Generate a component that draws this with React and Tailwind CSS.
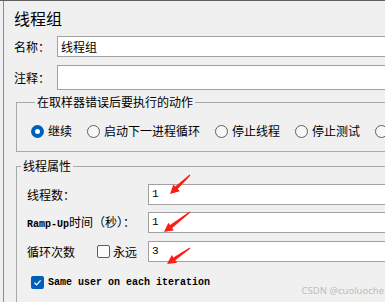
import React from 'react';

const cjk = "font-['Noto_Sans_CJK_SC','Microsoft_YaHei',sans-serif]";
const mono = "font-['Liberation_Mono','Courier_New',monospace]";

function Radio({ checked, label }) {
  return (
    <div className="flex items-center gap-[4px] shrink-0">
      {checked ? (
        <span className="w-[13px] h-[13px] rounded-full bg-[#005fb8] flex items-center justify-center">
          <span className="w-[5px] h-[5px] rounded-full bg-white" />
        </span>
      ) : (
        <span className="w-[13px] h-[13px] rounded-full border border-[#5f5f5f] bg-[#f7f7f7]" />
      )}
      {label && <span className="whitespace-nowrap">{label}</span>}
    </div>
  );
}

function Checkbox({ checked }) {
  if (checked) {
    return (
      <span className="w-[13px] h-[13px] rounded-[2px] bg-[#005fb8] flex items-center justify-center shrink-0">
        <svg width="9" height="9" viewBox="0 0 9 9">
          <path d="M1.5 4.8 L3.6 6.8 L7.6 2.3" fill="none" stroke="white" strokeWidth="1.2" />
        </svg>
      </span>
    );
  }
  return <span className="w-[13px] h-[13px] rounded-[2px] border border-[#5c5c5c] bg-[#fbfbfb] shrink-0" />;
}

function Field({ value, className = '' }) {
  return (
    <div className={`flex-1 flex items-center bg-white border border-[#a0a0a0] pl-[3px] ${className}`}>
      {value}
    </div>
  );
}

function Arrow({ tail, tip }) {
  const [tx, ty] = tail;
  const [px, py] = tip;
  const len = Math.hypot(px - tx, py - ty);
  const dx = (px - tx) / len;
  const dy = (py - ty) / len;
  const nx = -dy;
  const ny = dx;
  const bx = px - dx * 9;
  const by = py - dy * 9;
  const pts = [
    [tx + nx * 0.6, ty + ny * 0.6],
    [bx + nx * 1.8, by + ny * 1.8],
    [bx + nx * 4.6, by + ny * 4.6],
    [px, py],
    [bx - nx * 4.6, by - ny * 4.6],
    [bx - nx * 1.8, by - ny * 1.8],
    [tx - nx * 0.6, ty - ny * 0.6],
  ]
    .map((p) => p.join(','))
    .join(' ');
  return <polygon points={pts} fill="#ff1c14" />;
}

export default function App() {
  return (
    <div className={`relative w-[385px] h-[302px] overflow-hidden bg-[#f0f0f0] border-t border-[#5f5f5f] text-black text-[12px] ${cjk}`}>
      <div className="h-full w-[470px] ml-[3px] border-l border-[#8c8c8c] pl-[10px] pt-[5px]">
        <div className="text-[16px] leading-[24px] h-[24px]">线程组</div>

        <div className="mt-[6px] flex items-center h-[21px]">
          <span className="w-[43px] shrink-0">名称：</span>
          <Field value="线程组" className="h-[21px]" />
        </div>

        <div className="mt-[8px] flex items-center h-[25px]">
          <span className="w-[43px] shrink-0">注释：</span>
          <Field value="" className="h-[25px]" />
        </div>

        <fieldset className="mt-[4px] ml-[2px] border border-[#a8a8a8] pt-[13px] pb-[12px] pl-[14px]">
          <legend className="ml-[4px] px-[2px] leading-[16px]">在取样器错误后要执行的动作</legend>
          <div className="flex items-center gap-[15px] h-[16px]">
            <Radio checked label="继续" />
            <Radio label="启动下一进程循环" />
            <Radio label="停止线程" />
            <Radio label="停止测试" />
            <Radio />
          </div>
        </fieldset>

        <fieldset className="mt-[6px] ml-[2px] border border-[#a8a8a8] pt-[10px] pb-[20px]">
          <legend className="ml-[4px] px-[2px] leading-[16px]">线程属性</legend>

          <div className="flex items-center h-[21px] pl-[10px]">
            <span className="w-[121px] shrink-0">线程数：</span>
            <Field value={<span className={`${mono} text-[11px]`}>1</span>} className="h-[21px]" />
          </div>

          <div className="mt-[7px] flex items-center h-[21px] pl-[10px]">
            <span className="w-[121px] shrink-0 whitespace-nowrap">
              <span className={`${mono} text-[10px] font-bold`}>Ramp-Up</span>时间（秒）：
            </span>
            <Field value={<span className={`${mono} text-[11px]`}>1</span>} className="h-[21px]" />
          </div>

          <div className="mt-[8px] flex items-center h-[21px] pl-[10px]">
            <div className="w-[121px] shrink-0 flex items-center">
              <span className="w-[70px] shrink-0">循环次数</span>
              <Checkbox />
              <span className="ml-[3px]">永远</span>
            </div>
            <Field value={<span className={`${mono} text-[11px]`}>3</span>} className="h-[21px]" />
          </div>

          <div className="mt-[12px] flex items-center h-[16px] pl-[14px] gap-[4px]">
            <Checkbox checked />
            <span className={`${mono} text-[10px] font-bold whitespace-nowrap`}>Same user on each iteration</span>
          </div>
        </fieldset>
      </div>

      <svg className="absolute inset-0 pointer-events-none" width="385" height="302">
        <Arrow tail={[190, 174]} tip={[170, 193]} />
        <Arrow tail={[190, 211]} tip={[164, 231]} />
        <Arrow tail={[190, 247]} tip={[167, 263]} />
      </svg>

      <div className="absolute right-[1px] bottom-[5px] text-[9.5px] leading-[12px] text-[#bcbcbc] font-['Noto_Sans',sans-serif]">
        CSDN @cuoluoche
      </div>
    </div>
  );
}
